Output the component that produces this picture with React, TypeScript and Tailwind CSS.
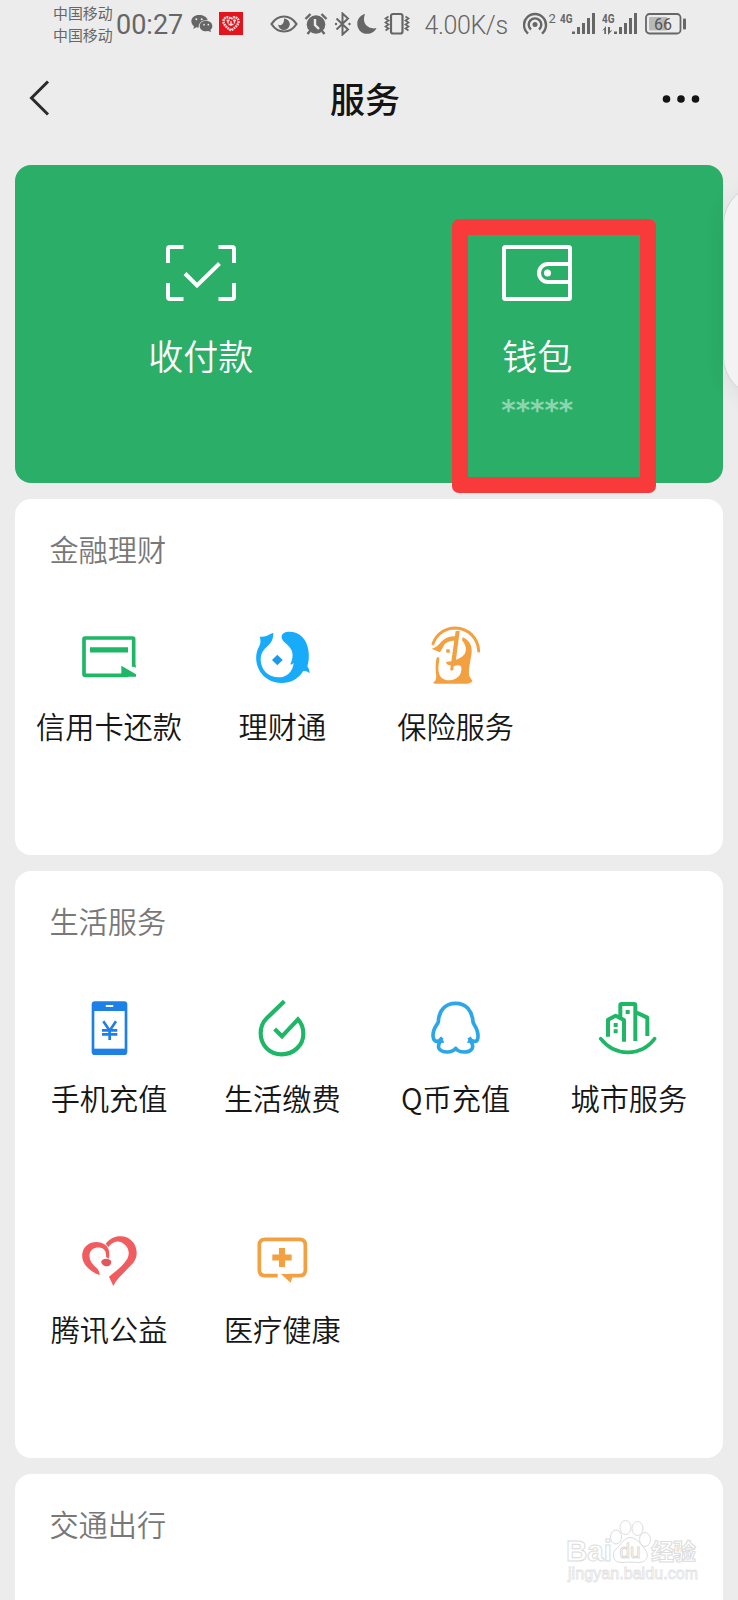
import type { ReactNode } from 'react';

type Item = { label: string; icon: ReactNode };

const GREEN = '#1db766';
const ORANGE = '#f3a041';

function Icon({ box, children }: { box: string; children: ReactNode }) {
  return (
    <svg className="h-16 w-16 shrink-0" viewBox={box} fill="none">
      {children}
    </svg>
  );
}

const creditCard = (
  <Icon box="231 375 192 192">
    <path d="M401 503V420q0-3-3-3H255q-3 0-3 3v106q0 3 3 3H385" stroke={GREEN} strokeWidth="11" />
    <path d="M364 500L408 526V533H364Z M396 498l11 9v-8z" fill={GREEN} />
    <path d="M270 452.500H384" stroke={GREEN} strokeWidth="16" />
  </Icon>
);

const wealth = (
  <Icon box="751 375 192 192">
    <path
      d="M821 401C804 409 795 415 780 413C784 424 783 432 779 441C768 460 766 484 776 508C789 538 817 552 846 552C872 552 895 542 910 517C916 515 923 517 930 523C929 514 928 509 923 502C932 473 928 433 907 413C895 400 875 396 860 399C847 402 842 412 849 423C854 432 872 441 877 457C881 470 878 483 872 496C876 497 879 495 882 491C880 517 862 535 838 535C808 536 784 514 783 484C782 463 792 451 805 440C817 429 821 417 821 401Z"
      fill="#17abfa"
    />
    <path d="M833 467L849 483L833 499L817 483Z" fill="#1c9ce8" />
  </Icon>
);

const insurance = (
  <Icon box="167 375 192 192">
    <path d="M194 434C207 400 236 387 260 387C302 388 329 418 331 456" stroke={ORANGE} strokeWidth="9" strokeLinecap="round" />
    <path d="M190 449C204 446 211 436 222 425C234 414 250 410 266 412L264 426C250 423 233 429 226 440C222 449 218 455 215 460C207 455 198 454 190 449Z" fill={ORANGE} />
    <path
      d="M283 415C300 422 312 437 310 459C307 486 299 512 303 532L312 545C309 553 300 554 288 554H201C193 554 194 550 199 547C208 540 201 522 202 499C203 488 203 479 207 474C212 474 214 478 213 484C210 500 208 517 215 530C221 540 231 544 244 544C261 543 275 533 278 519C280 511 280 505 277 501C269 497 262 500 256 502L255 512C252 517 245 515 246 509L247 499C239 498 234 496 233 490C238 487 246 488 249 487L262 396L274 396L263 482C278 477 289 470 292 457C295 444 288 432 281 424Z"
      fill={ORANGE}
    />
    <circle cx="239" cy="456" r="6" fill={ORANGE} />
  </Icon>
);

const phone = (
  <Icon box="232 321 192 192">
    <rect x="276" y="337" width="107" height="161" rx="10" fill="#1d80e8" />
    <rect x="284" y="366" width="91" height="113" fill="#fff" />
    <rect x="318" y="348" width="23" height="6" rx="2" fill="#fff" />
    <path d="M311 397L330 425L349 397M307 424H353M307 436H353M330 424V453" stroke="#1d80e8" strokeWidth="8" />
  </Icon>
);

const bills = (
  <Icon box="751 321 192 192">
    <path d="M854 337L801 388C788 401 783 416 783 433C783 470 811 496 846 496C882 496 911 469 911 434C911 418 906 403 895 391L847 442L825 420" stroke={GREEN} strokeWidth="12.500" />
  </Icon>
);

const qq = (
  <Icon box="167 321 192 192">
    <path
      d="M221 446C217 453 210 458 204 457C193 455 192 436 197 423C200 413 207 406 210 399C211 365 230 343 262 343C294 343 312 366 314 399C316 407 323 413 326 424C331 438 330 456 321 457C314 458 306 453 302 446M216 457C212 463 209 472 212 478C220 492 252 493 262 478C272 493 303 492 311 479C315 471 312 463 307 457"
      stroke="#2ba6e9"
      strokeWidth="11"
      strokeLinejoin="round"
    />
    <path d="M208 463L219 442L228 461ZM316 463L306 442L296 461Z" fill="#2ba6e9" />
  </Icon>
);

const city = (
  <Icon box="687 321 192 192">
    <path d="M720 443V392L743 380L768 393V458M757 384V349Q757 345 761 345H798Q802 345 802 349V456M802 369L838 386V441" stroke={GREEN} strokeWidth="12" strokeLinejoin="round" />
    <path d="M773 363h12v12h-12zM737 402h12v12h-12zM737 421h12v12h-12z" fill={GREEN} />
    <path d="M698 449C720 477 748 490 779 490C811 490 839 477 860 449" stroke={GREEN} strokeWidth="11" strokeLinecap="round" />
  </Icon>
);

const charity = (
  <Icon box="231 84 192 192">
    <path
      d="M317 134C332 116 349 110 365 112C391 114 410 135 410 161C410 177 403 188 393 199C374 219 350 239 340 261L327 233C346 218 366 203 379 184C390 168 389 146 371 134C356 123 340 127 325 144Z"
      fill="#f15c5f"
    />
    <path
      d="M326 180C331 159 327 145 313 136C289 121 259 131 249 155C240 182 256 202 275 216C283 222 290 226 299 228C299 221 297 215 290 207C277 196 266 183 269 164C273 149 287 143 301 146C313 148 320 158 318 174C321 175 324 177 326 180Z"
      fill="#f15c5f"
    />
    <path d="M304 187C307 180 316 177 326 181C335 185 336 191 331 197C325 204 315 203 309 198C305 195 303 191 304 187Z" fill="#e2585c" />
  </Icon>
);

const medical = (
  <Icon box="751 84 192 192">
    <path d="M834 230H796Q779 230 779 213V138Q779 121 796 121H900Q917 121 917 138V213Q917 230 900 230H866" stroke={ORANGE} strokeWidth="11" />
    <path d="M847 147V204M818 175.500H876" stroke={ORANGE} strokeWidth="18" />
    <path d="M844 225L873 251L878 235V225Z" fill={ORANGE} />
  </Icon>
);

const finance: Item[] = [
  { label: '信用卡还款', icon: creditCard },
  { label: '理财通', icon: wealth },
  { label: '保险服务', icon: insurance },
];

const life: Item[] = [
  { label: '手机充值', icon: phone },
  { label: '生活缴费', icon: bills },
  { label: 'Q币充值', icon: qq },
  { label: '城市服务', icon: city },
  { label: '腾讯公益', icon: charity },
  { label: '医疗健康', icon: medical },
];

function Section({ title, items }: { title: string; items: Item[] }) {
  return (
    <section className="min-h-[200px] rounded-2xl bg-white px-[7px]">
      <h2 className="flex h-[124.5px] items-start px-[27px] pt-[27px] text-[29.2px] leading-[44px] font-[350] text-[#787878]">{title}</h2>
      <div className="grid grid-cols-4">
        {items.map((item) => (
          <div key={item.label} className="flex h-[231px] flex-col items-center pt-[0.5px]">
            {item.icon}
            <span className="mt-[15px] text-[29.2px] leading-[44px] font-[350] whitespace-nowrap text-[#161616]">{item.label}</span>
          </div>
        ))}
      </div>
    </section>
  );
}

function Signal({ data }: { data?: boolean }) {
  return (
    <svg className="h-6 w-9" viewBox="0 0 36 24" fill="#666">
      <text x="0" y="10.500" fontSize="12.500" fontWeight="700" textLength="12.500" lengthAdjust="spacingAndGlyphs" fontFamily="Roboto, sans-serif">4G</text>
      {data && <path d="M0 19l4-5v8H2.300v-4.500zM6 15h2v4L10.500 18l-4.500 5z" />}
      <path d="M12 19.500h3V22h-3zM17 15h3v7h-3zM22 11h3v11h-3zM27 6h3v16h-3zM32 1h3v21h-3z" />
    </svg>
  );
}

function StatusBar() {
  return (
    <div className="flex h-12 items-start pl-[53px] text-[#666]">
      <div className="flex w-[60px] flex-col pt-[2px] text-[14.9px] leading-[22px] whitespace-nowrap">
        <span>中国移动</span>
        <span>中国移动</span>
      </div>
      <span className="ml-[3px] w-[67px] pt-[9px] font-[Roboto] text-[27px] leading-8">00:27</span>
      <svg className="mt-3 ml-[7px] h-6 w-6" viewBox="570 36 72 72" fill="#666">
        <path d="M597 45c-13 0-23 8-23 19 0 6 3 11 8 15l-2 8 9-5 7 1c-1-14 9-23 27-23-2-9-13-15-26-15z" />
        <path d="M618 62c-11 0-19 7-19 16s8 16 19 16l7-1 8 4-2-7c4-3 6-7 6-12 0-9-8-16-19-16z" />
        <g fill="#ececec">
          <circle cx="589" cy="58" r="3" />
          <circle cx="605" cy="58" r="3" />
          <circle cx="612" cy="74" r="2.500" />
          <circle cx="625" cy="74" r="2.500" />
        </g>
      </svg>
      <svg className="mt-3 ml-[5px] h-[23px] w-6" viewBox="0 0 24 23">
        <rect width="24" height="23" fill="#e3141d" />
        <path d="M12 18.500C8 15.500 4.500 13 4.500 9.500C4.500 5 9.500 4 12 7C14.500 4 19.500 5 19.500 9.500C19.500 13 16 15.500 12 18.500Z" fill="none" stroke="#fbdcdc" strokeWidth="2.500" strokeDasharray="1.800 .7" />
        <path d="M7.500 8.500h3M9 7.500v4M12 9v5M14 8.500h3M15.500 7.500v4M9.500 12.500h5" stroke="#fbdcdc" strokeWidth="1.300" />
      </svg>
      <svg className="mt-3 ml-[27px] h-6 w-[28px]" viewBox="0 0 28 24" fill="none">
        <path d="M1.500 12C8 2 20 2 26.500 12C20 22 8 22 1.500 12Z" stroke="#666" strokeWidth="2.200" />
        <path d="M14 6.500a5.800 5.800 0 1 1-5.800 6c3 2 6.300-1 5.800-6z" fill="#666" />
      </svg>
      <svg className="mt-3 ml-[6px] h-6 w-6" viewBox="0 0 24 24" fill="none">
        <circle cx="12" cy="12.500" r="9.300" fill="#666" />
        <path d="M1.500 7L6.500 2M22.500 7L17.500 2M6 19l-2.500 3M18 19l2.500 3" stroke="#666" strokeWidth="2.400" />
        <path d="M11 7v6l4 4" stroke="#ececec" strokeWidth="2.400" />
      </svg>
      <svg className="mt-3 ml-[6px] h-6 w-[18px]" viewBox="0 0 18 24" fill="none">
        <path d="M2.500 6.500L14 17.500L8.500 22.500V1.500L14 6.500L2.500 17.500" stroke="#666" strokeWidth="2" />
        <circle cx="2" cy="12" r="1.200" fill="#666" />
        <circle cx="15.500" cy="12" r="1.200" fill="#666" />
      </svg>
      <svg className="mt-3 ml-[5px] h-6 w-5" viewBox="0 0 20 24">
        <path d="M8 2C0 4 -2 13 3 19C8 24 17 22 19.500 16C12 18 4 12 8 2Z" fill="#666" />
      </svg>
      <svg className="mt-3 ml-[7px] h-6 w-[26px]" viewBox="0 0 26 24" fill="none" stroke="#666">
        <rect x="7" y="2" width="11.500" height="19.500" rx="2" strokeWidth="2.200" />
        <path d="M4.500 4.500l-3 2 3 2-3 2 3 2-3 2 3 2-3 2M21.500 4.500l3 2-3 2 3 2-3 2 3 2-3 2 3 2" strokeWidth="1.700" />
      </svg>
      <span className="ml-[14.5px] w-[84px] pt-[10px] font-[Roboto] text-[25px] leading-8 font-[350] tracking-[-0.4px]">4.00K/s</span>
      <svg className="mt-3 ml-[14px] h-6 w-[34px]" viewBox="0 0 34 24" fill="none" stroke="#666" strokeWidth="2.400">
        <path d="M5 21.500A11 11 0 1 1 19 21.500" />
        <path d="M8 17.500A6.300 6.300 0 1 1 16 17.500" />
        <circle cx="12" cy="12.500" r="2.500" fill="#666" stroke="none" />
        <text x="25.500" y="11" fontSize="13" fill="#666" stroke="none" fontFamily="Roboto, sans-serif">2</text>
      </svg>
      <div className="mt-3 ml-[3px] flex gap-[6px]">
        <Signal />
        <Signal data />
      </div>
      <svg className="mt-3 ml-[7px] h-6 w-[42px]" viewBox="0 0 42 24" fill="none">
        <rect x="1" y="2" width="34.500" height="19.500" rx="3.500" stroke="#666" strokeWidth="1.800" />
        <rect x="4" y="5" width="18" height="13.500" rx="1" fill="#b9b9b9" />
        <rect x="38" y="6.500" width="3" height="11" rx="1" fill="#666" />
        <text x="18" y="17.700" textAnchor="middle" fontSize="16" fill="#555" fontFamily="Roboto, sans-serif">66</text>
      </svg>
    </div>
  );
}

function Watermark() {
  return (
    <svg className="absolute top-[1512px] left-[560px] h-[76px] w-[146px]" viewBox="0 0 146 76" fill="#fff" stroke="#dcdcdc">
      <g fontFamily="'Liberation Sans', 'Noto Sans CJK SC', sans-serif" fontWeight="700">
        <text x="6" y="49" fontSize="30" textLength="46" lengthAdjust="spacingAndGlyphs">Bai</text>
        <text x="91" y="48" fontSize="23" textLength="45">经验</text>
      </g>
      <ellipse cx="56" cy="25" rx="5.500" ry="7" />
      <ellipse cx="65.500" cy="15.500" rx="5.500" ry="7" />
      <ellipse cx="77.500" cy="16.500" rx="5.500" ry="7" />
      <ellipse cx="85" cy="27.500" rx="5.500" ry="7" />
      <path d="M70 25.500C76 25.500 80 31 84 36C91 44 86 51 78 50.500C73 50 67 50 62 50.500C53 51 51 42 56 37C61 33 64 25.500 70 25.500Z" />
      <text x="59.500" y="46" fontSize="20" fontFamily="'Liberation Sans', sans-serif" textLength="21" lengthAdjust="spacingAndGlyphs">du</text>
      <text x="8" y="66.500" fontSize="16" textLength="130" stroke="#e2e2e2" strokeWidth="0.800" fontFamily="'Liberation Sans', sans-serif">jingyan.baidu.com</text>
    </svg>
  );
}

export default function App() {
  return (
    <div className="relative h-[1600px] w-[738px] overflow-hidden bg-[#ececec] font-['Noto_Sans_CJK_SC',sans-serif]">
      <StatusBar />
      <header className="flex h-[116.5px] items-start justify-between pr-[36px] pl-[28px]">
        <svg className="mt-[31px] h-[38px] w-[42px]" viewBox="0 0 42 38" fill="none">
          <path d="M20 2.500L3.500 19L20 35.500" stroke="#2b2b2b" strokeWidth="3" />
        </svg>
        <h1 className="mt-[24px] ml-[-2px] text-[35px] leading-[52px] font-medium text-[#141414]">服务</h1>
        <svg className="mt-[45px] h-3 w-[40px]" viewBox="0 0 40 12" fill="#141414">
          <circle cx="4.500" cy="6" r="3.800" />
          <circle cx="19" cy="6" r="3.800" />
          <circle cx="33.500" cy="6" r="3.800" />
        </svg>
      </header>

      <main className="flex flex-col gap-[16.5px] pr-[15.5px] pl-[15.4px]">
        <section className="grid h-[318px] grid-cols-2 rounded-2xl bg-[#2bae67] px-[17px] text-white">
          <div className="flex flex-col items-center pt-[79.5px]">
            <svg className="h-[58px] w-[72px]" viewBox="0 0 72 58" fill="none" stroke="#fff" strokeWidth="4">
              <path d="M3 19V5q0-2 2-2H18.500M53.500 3H67q2 0 2 2V19M3 39V53q0 2 2 2H18.500M53.500 55H67q2 0 2-2V39" />
              <path d="M20 29.500L32 41.500L54.500 19.500" strokeWidth="4" />
            </svg>
            <span className="mt-[26.5px] text-[35px] leading-[52px] font-[350]">收付款</span>
          </div>
          <div className="flex flex-col items-center pt-[79.5px]">
            <svg className="h-[58px] w-[72px]" viewBox="0 0 72 58" fill="none" stroke="#fff" strokeWidth="4">
              <rect x="3" y="3" width="66" height="52" rx="1.500" />
              <path d="M69 20H47a9 9 0 0 0 0 18H69" />
              <circle cx="46.500" cy="29" r="3.500" fill="#fff" stroke="none" />
            </svg>
            <span className="mt-[26.5px] text-[35px] leading-[52px] font-[350]">钱包</span>
            <span className="mt-[11px] font-['DejaVu_Sans'] text-[27.5px] leading-[36px] font-bold text-[#8dd5ae]">*****</span>
          </div>
        </section>
        <Section title="金融理财" items={finance} />
        <Section title="生活服务" items={life} />
        <Section title="交通出行" items={[]} />
      </main>

      <div className="absolute top-[184px] left-[723px] h-[213px] w-[60px] rounded-l-[40px] border border-[#d4d4d4] bg-[#f3f3f3] shadow-[0_4px_22px_rgba(0,0,0,0.07)]" />
      <div className="absolute top-[219px] left-[452px] h-[274px] w-[204px] rounded-[7px] border-16 border-[#f83a3a]" />
      <Watermark />
    </div>
  );
}
